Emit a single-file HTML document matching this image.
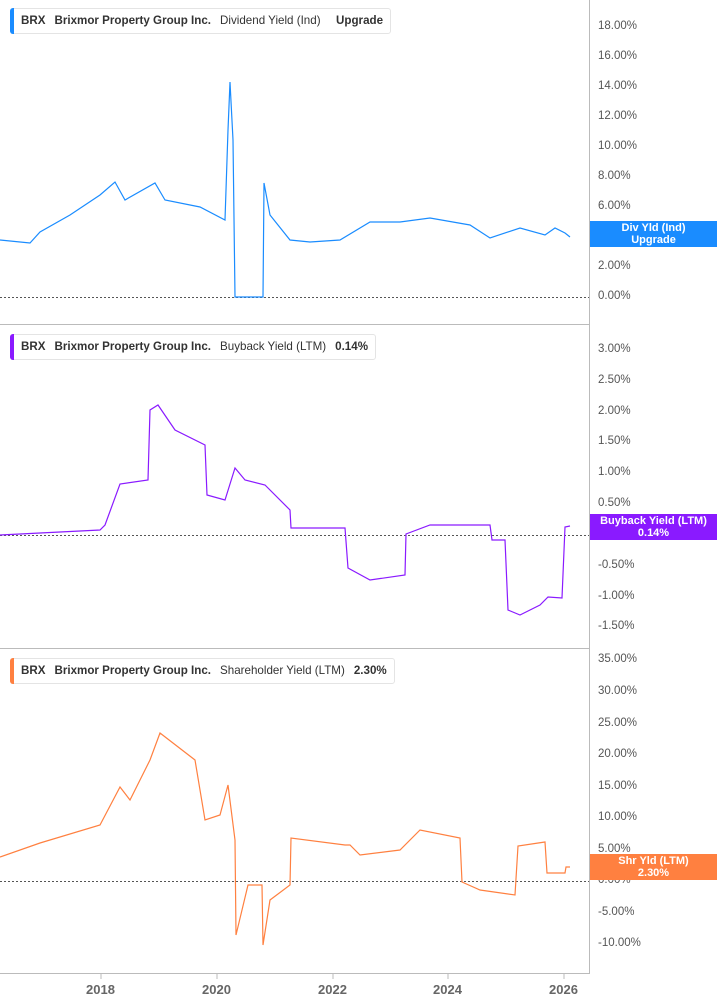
<!DOCTYPE html><html><head><style>
body{margin:0;width:717px;height:1005px;background:#fff;font-family:"Liberation Sans",sans-serif;overflow:hidden;position:relative}
.h{position:absolute;left:10px;height:24px;border:1px solid #e4e4e4;border-radius:3px;background:#fff;font-size:11.6px;font-weight:bold;color:#333;line-height:24px;padding:0 7px 0 10px;white-space:nowrap}
.h:before{content:"";position:absolute;left:-1px;top:-1px;bottom:-1px;width:4px;border-radius:3px 0 0 3px;background:var(--c)}
.h span{margin-right:9px}.h .n{font-weight:normal}
.t{position:absolute;left:598px;font-size:11.5px;color:#555}
.lb{position:absolute;left:590px;width:127px;color:#fff;font-size:11px;font-weight:bold;text-align:center;line-height:12px;padding:1px 0}
.x{position:absolute;top:982px;font-size:13px;font-weight:bold;color:#666}
</style></head><body>
<svg width="717" height="1005" style="position:absolute;left:0;top:0">
<g stroke="#bbb" stroke-width="1" fill="none">
<line x1="589.5" y1="0" x2="589.5" y2="974"/><line x1="0" y1="324.5" x2="589" y2="324.5"/><line x1="0" y1="648.5" x2="589" y2="648.5"/><line x1="0" y1="973.5" x2="589" y2="973.5"/>
<line x1="101" y1="974" x2="101" y2="979"/><line x1="217" y1="974" x2="217" y2="979"/><line x1="333" y1="974" x2="333" y2="979"/><line x1="448" y1="974" x2="448" y2="979"/><line x1="564" y1="974" x2="564" y2="979"/>
</g>
<g stroke="#555" stroke-dasharray="2,2" stroke-width="1"><line x1="0" y1="297.5" x2="589" y2="297.5"/><line x1="0" y1="535.5" x2="589" y2="535.5"/><line x1="0" y1="881.5" x2="589" y2="881.5"/></g>
<polyline fill="none" stroke="#1a8cff" stroke-width="1.2" points="0,240 30,243 40,232 70,215 100,195 115,182 125,200 155,183 165,200 200,207 225,220 228,130 230,82 233,140 235,297 263,297 264,183 270,215 290,240 310,242 340,240 370,222 400,222 430,218 470,225 490,238 520,228 545,235 555,228 565,233 570,237"/>
<polyline fill="none" stroke="#8a1aff" stroke-width="1.2" points="0,535 60,532 100,530 105,525 120,484 148,480 150,410 158,405 175,430 205,445 207,495 225,500 235,468 245,480 265,485 290,510 291,528 345,528 348,568 370,580 405,575 406,534 430,525 490,525 492,540 505,540 508,610 520,615 540,605 548,597 562,598 565,527 570,526"/>
<polyline fill="none" stroke="#ff8040" stroke-width="1.2" points="0,857 40,843 100,825 120,787 130,800 150,760 160,733 195,760 205,820 220,815 228,785 235,840 236,935 248,885 262,885 263,945 270,900 290,885 291,838 345,845 350,845 360,855 400,850 420,830 460,838 462,882 480,890 515,895 518,846 545,842 547,873 565,873 566,867 570,867"/>
</svg>
<div class="h" style="--c:#1a8cff;top:8px"><span>BRX</span><span>Brixmor Property Group Inc.</span><span class="n">Dividend Yield (Ind)</span>&nbsp; Upgrade</div>
<div class="h" style="--c:#8a1aff;top:334px"><span>BRX</span><span>Brixmor Property Group Inc.</span><span class="n">Buyback Yield (LTM)</span>0.14%</div>
<div class="h" style="--c:#ff8040;top:658px"><span>BRX</span><span>Brixmor Property Group Inc.</span><span class="n">Shareholder Yield (LTM)</span>2.30%</div>
<div class="t" style="top:20px">18.00%</div><div class="t" style="top:50px">16.00%</div><div class="t" style="top:80px">14.00%</div><div class="t" style="top:110px">12.00%</div><div class="t" style="top:140px">10.00%</div><div class="t" style="top:170px">8.00%</div><div class="t" style="top:200px">6.00%</div><div class="t" style="top:260px">2.00%</div><div class="t" style="top:290px">0.00%</div>
<div class="lb" style="top:221px;background:#1a8cff">Div Yld (Ind)<br>Upgrade</div>
<div class="t" style="top:343px">3.00%</div><div class="t" style="top:374px">2.50%</div><div class="t" style="top:405px">2.00%</div><div class="t" style="top:435px">1.50%</div><div class="t" style="top:466px">1.00%</div><div class="t" style="top:497px">0.50%</div><div class="t" style="top:559px">-0.50%</div><div class="t" style="top:590px">-1.00%</div><div class="t" style="top:620px">-1.50%</div>
<div class="lb" style="top:514px;background:#8a1aff">Buyback Yield (LTM)<br>0.14%</div>
<div class="t" style="top:653px">35.00%</div><div class="t" style="top:685px">30.00%</div><div class="t" style="top:717px">25.00%</div><div class="t" style="top:748px">20.00%</div><div class="t" style="top:780px">15.00%</div><div class="t" style="top:811px">10.00%</div><div class="t" style="top:843px">5.00%</div><div class="t" style="top:874px">0.00%</div><div class="t" style="top:906px">-5.00%</div><div class="t" style="top:937px">-10.00%</div>
<div class="lb" style="top:854px;background:#ff8040">Shr Yld (LTM)<br>2.30%</div>
<div class="x" style="left:86px">2018</div><div class="x" style="left:202px">2020</div><div class="x" style="left:318px">2022</div><div class="x" style="left:433px">2024</div><div class="x" style="left:549px">2026</div>
</body></html>
